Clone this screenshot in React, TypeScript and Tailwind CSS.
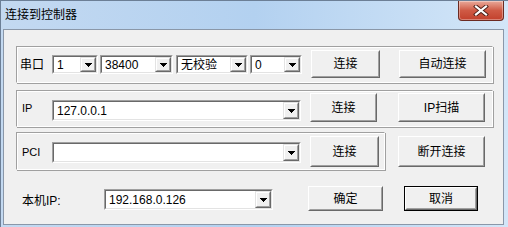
import React from "react";

const FONT = "font-['Liberation_Sans','Noto_Sans_CJK_SC',sans-serif]";

function Arrow() {
  return (
    <svg width="7" height="4" viewBox="0 0 7 4" shapeRendering="crispEdges">
      <rect x="0" y="0" width="7" height="1" fill="#000" />
      <rect x="1" y="1" width="5" height="1" fill="#000" />
      <rect x="2" y="2" width="3" height="1" fill="#000" />
      <rect x="3" y="3" width="1" height="1" fill="#000" />
    </svg>
  );
}

function Combo({ w, h, text, className = "" }: { w: string; h: string; text: string; className?: string }) {
  return (
    <div
      className={`${w} ${h} ${className} flex border border-t-[#a0a0a0] border-l-[#a0a0a0] border-r-white border-b-white`}
    >
      <div className="flex-1 flex border border-t-[#696969] border-l-[#696969] border-r-[#e3e3e3] border-b-[#e3e3e3] bg-white min-w-0">
        <div className="flex-1 flex items-center pl-[3px] text-[12px] leading-none text-black whitespace-nowrap overflow-hidden">
          {text}
        </div>
        <div className="w-[16px] flex border border-t-[#e3e3e3] border-l-[#e3e3e3] border-r-[#696969] border-b-[#696969]">
          <div className="flex-1 flex items-center justify-center bg-[#f0f0f0] border border-t-white border-l-white border-r-[#a0a0a0] border-b-[#a0a0a0]">
            <Arrow />
          </div>
        </div>
      </div>
    </div>
  );
}

function Btn({ w, h, label, className = "" }: { w: string; h: string; label: string; className?: string }) {
  return (
    <div
      className={`${w} ${h} ${className} flex border border-t-white border-l-white border-r-[#696969] border-b-[#696969] bg-[#f0f0f0]`}
    >
      <div className="flex-1 flex items-center justify-center border border-t-[#f0f0f0] border-l-[#f0f0f0] border-r-[#a0a0a0] border-b-[#a0a0a0] text-[12px] leading-none text-black">
        {label}
      </div>
    </div>
  );
}

function Group({ className = "", children }: { className?: string; children: React.ReactNode }) {
  return (
    <div
      className={`${className} flex items-start border border-t-[#a0a0a0] border-l-[#a0a0a0] border-r-white border-b-white shadow-[inset_1px_1px_0_#ffffff,-1px_-1px_0_#f0f0f0,1px_1px_0_#a0a0a0]`}
    >
      {children}
    </div>
  );
}

export default function App() {
  return (
    <div
      className={`${FONT} w-[508px] h-[227px] overflow-hidden flex flex-col bg-gradient-to-r from-[#c3d9f1] via-[#b3d1f0] to-[#d3e6f8] border-t border-l border-[#6c7f96]`}
    >
      {/* Title bar */}
      <div className="h-[28px] flex items-start justify-between shrink-0">
        <div className="pl-[4px] pt-[8px] text-[12px] leading-none text-black">连接到控制器</div>
        <div className="mr-[4px] w-[46px] h-[20px] rounded-b-[4px] border border-t-0 border-[#6b2a22] bg-gradient-to-b from-[#e9a99a] via-[#cf5a45] to-[#c2402c] flex items-center justify-center shadow-[inset_0_0_0_1px_rgba(255,255,255,0.35)]">
          <svg width="16" height="11" viewBox="0 0 16 11">
            <path d="M3 1.5 L13 9.5 M13 1.5 L3 9.5" stroke="#4a1d16" strokeWidth="4" strokeLinecap="square" />
            <path d="M3 1.5 L13 9.5 M13 1.5 L3 9.5" stroke="#ffffff" strokeWidth="2.2" strokeLinecap="square" />
          </svg>
        </div>
      </div>

      {/* Client area */}
      <div className="ml-[2px] mr-[4px] h-[196px] shrink-0 border border-[#8a97a8] bg-[#f0f0f0] flex flex-col pl-[12px] pt-[16px]">
        {/* Row 1: 串口 */}
        <Group className="w-[477px] h-[37px]">
          <div className="w-[35px] self-center pl-[3px] text-[12px] leading-none text-black">串口</div>
          <Combo w="w-[46px]" h="h-[19px]" text="1" className="mt-[8px]" />
          <Combo w="w-[73px]" h="h-[19px]" text="38400" className="mt-[8px] ml-[2px]" />
          <Combo w="w-[72px]" h="h-[19px]" text="无校验" className="mt-[8px] ml-[3px]" />
          <Combo w="w-[52px]" h="h-[19px]" text="0" className="mt-[8px] ml-[2px]" />
          <Btn w="w-[69px]" h="h-[28px]" label="连接" className="mt-[3px] ml-[9px]" />
          <Btn w="w-[87px]" h="h-[28px]" label="自动连接" className="mt-[3px] ml-[19px]" />
        </Group>

        {/* Row 2: IP */}
        <Group className="w-[477px] h-[37px] mt-[7px]">
          <div className="w-[35px] self-center pl-[5px] text-[11px] leading-none text-black">IP</div>
          <Combo w="w-[249px]" h="h-[21px]" text="127.0.0.1" className="mt-[9px]" />
          <Btn w="w-[67px]" h="h-[29px]" label="连接" className="mt-[2px] ml-[9px]" />
          <Btn w="w-[87px]" h="h-[29px]" label="IP扫描" className="mt-[2px] ml-[21px]" />
        </Group>

        {/* Row 3: PCI */}
        <div className="flex items-start mt-[5px]">
          <Group className="w-[369px] h-[38px]">
            <div className="w-[35px] self-center pl-[5px] pt-[3px] text-[11px] leading-none text-black">PCI</div>
            <Combo w="w-[249px]" h="h-[21px]" text="" className="mt-[9px]" />
            <Btn w="w-[69px]" h="h-[31px]" label="连接" className="mt-[3px] ml-[9px]" />
          </Group>
          <Btn w="w-[87px]" h="h-[31px]" label="断开连接" className="mt-[4px] ml-[13px]" />
        </div>

        {/* Bottom row */}
        <div className="flex items-start mt-[16px]">
          <div className="w-[88px] mt-[9px] pl-[6px] text-[12px] leading-none text-black whitespace-nowrap">本机IP:</div>
          <Combo w="w-[169px]" h="h-[21px]" text="192.168.0.126" className="mt-[3px]" />
          <Btn w="w-[75px]" h="h-[25px]" label="确定" className="ml-[35px]" />
          <div className="ml-[21px] w-[74px] h-[25px] flex border border-black">
            <Btn w="flex-1" h="h-full" label="取消" />
          </div>
        </div>
      </div>
    </div>
  );
}
